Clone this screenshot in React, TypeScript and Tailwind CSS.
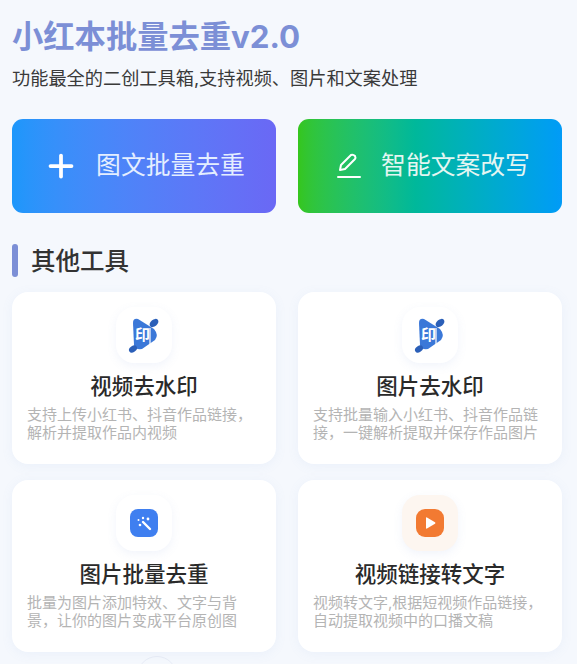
import { Plus } from "lucide-react";

const font = "font-['Inter','Noto_Sans_CJK_SC',sans-serif]";

function StampIcon() {
    return <svg width="34" height="38" viewBox="0 0 34 38">
        <path d="M6 7 Q6 2 11 3 L27 13 Q32 19 28 24 L15 33 Q8 34 7 29 Z" fill="#3b78d8" />
        <ellipse cx="27" cy="7" rx="5" ry="3.4" transform="rotate(-40 27 7)" fill="#2b5fb8" />
        <ellipse cx="6" cy="33" rx="4.4" ry="3" transform="rotate(-35 6 33)" fill="#2b5fb8" />
        <text x="8" y="24" fontSize="15" fontWeight="700" fill="#ffffff">印</text>
        <path d="M23 12 L23 29" stroke="#ffffff" strokeWidth="1.2" />
    </svg>
}

function WandIcon() {
    return <div className="flex h-[28px] w-[28px] items-center justify-center rounded-[8px] bg-[#3f7ff0]">
        <svg width="18" height="18" viewBox="0 0 18 18" fill="none">
            <path d="M8 8 L15 15" stroke="#ffffff" strokeWidth="2.4" strokeLinecap="round" />
            <circle cx="5" cy="11" r="1.3" fill="#ffffff" />
            <circle cx="8" cy="4" r="1.2" fill="#ffffff" />
            <circle cx="3.5" cy="6" r="1" fill="#ffffff" />
            <circle cx="13" cy="5" r="1.4" fill="#ffffff" />
        </svg>
    </div>
}

function PlayIcon() {
    return <div className="flex h-[28px] w-[28px] items-center justify-center rounded-[9px] bg-[#f27a32]">
        <svg width="14" height="14" viewBox="0 0 14 14">
            <path d="M3 2 Q3 1 4 1.5 L12 6.2 Q13 7 12 7.8 L4 12.5 Q3 13 3 12 Z" fill="#ffffff" />
        </svg>
    </div>
}

interface ToolCardProps {
    title: string;
    lines: string[];
    icon: React.ReactNode;
    tint?: string;
}

function ToolCard({ title, lines, icon, tint }: ToolCardProps) {
    return <div className="flex h-[172px] flex-col items-center rounded-[16px] bg-white px-[15px] pt-[15px] shadow-[0_2px_12px_rgba(120,150,220,0.08)]">
        <div className={`flex h-[56px] w-[56px] items-center justify-center rounded-[18px] shadow-[0_3px_10px_rgba(120,150,220,0.1)] ${tint ?? "bg-white"}`}>
            {icon}
        </div>
        <h3 className="mt-[8px] text-[21.5px] leading-[30px] font-medium text-[#2a2a2a]">{title}</h3>
        <div className="mt-[5px] w-full text-[15px] leading-[18px] text-[#b4b4b4]">
            {lines.map((line) => <p key={line} className="whitespace-nowrap">{line}</p>)}
        </div>
    </div>
}

export default function App() {
    return <div className={`h-[664px] overflow-hidden bg-[#f5f8fd] px-[12px] pt-[17px] ${font}`}>
        <h1 className="text-[31.3px] leading-[40px] font-bold text-[#7c8fd6]">小红本批量去重v2.0</h1>
        <p className="mt-[9px] text-[18.2px] leading-[24px] text-[#3a3a3a]">功能最全的二创工具箱,支持视频、图片和文案处理</p>

        <div className="mt-[29px] grid grid-cols-[264px_264px] gap-[22px]">
            <div className="flex h-[94px] items-center justify-center gap-[17px] rounded-[11px] bg-gradient-to-r from-[#1c97fb] to-[#6a68f5] text-[#e4eeff]">
                <Plus size={36} strokeWidth={2.5} className="text-white" />
                <span className="text-[24.8px]">图文批量去重</span>
            </div>
            <div className="flex h-[94px] items-center justify-center gap-[19px] rounded-[11px] bg-gradient-to-r from-[#35c61c] to-[#039bf7] pl-[6px] text-[#e4f6f2]">
                <svg width="26" height="28" viewBox="0 0 26 28" fill="none" stroke="#ffffff" strokeWidth="2" strokeLinejoin="round" strokeLinecap="round">
                    <path d="M4 18 L5 13 L15 3 Q17 2 19 4 Q20 6 19 7 L9 17 Z" />
                    <path d="M2 25 L24 25" />
                </svg>
                <span className="text-[24.8px]">智能文案改写</span>
            </div>
        </div>

        <div className="mt-[31px] flex items-center gap-[13px]">
            <div className="h-[33px] w-[6px] rounded-full bg-[#7c8fd6]" />
            <h2 className="translate-y-[1px] text-[24.5px] leading-[33px] font-medium text-[#333333]">其他工具</h2>
        </div>

        <div className="mt-[15px] grid grid-cols-[264px_264px] gap-x-[22px] gap-y-[16px]">
            <ToolCard title="视频去水印" lines={["支持上传小红书、抖音作品链接，", "解析并提取作品内视频"]} icon={<StampIcon />} />
            <ToolCard title="图片去水印" lines={["支持批量输入小红书、抖音作品链", "接，一键解析提取并保存作品图片"]} icon={<StampIcon />} />
            <ToolCard title="图片批量去重" lines={["批量为图片添加特效、文字与背", "景，让你的图片变成平台原创图"]} icon={<WandIcon />} />
            <ToolCard title="视频链接转文字" lines={["视频转文字,根据短视频作品链接，", "自动提取视频中的口播文稿"]} icon={<PlayIcon />} tint="bg-[#fdf6f0]" />
        </div>

        <div className="ml-[125px] mt-[4px] h-[40px] w-[40px] rounded-full border border-[#e8ecf6]" />
    </div>
}
